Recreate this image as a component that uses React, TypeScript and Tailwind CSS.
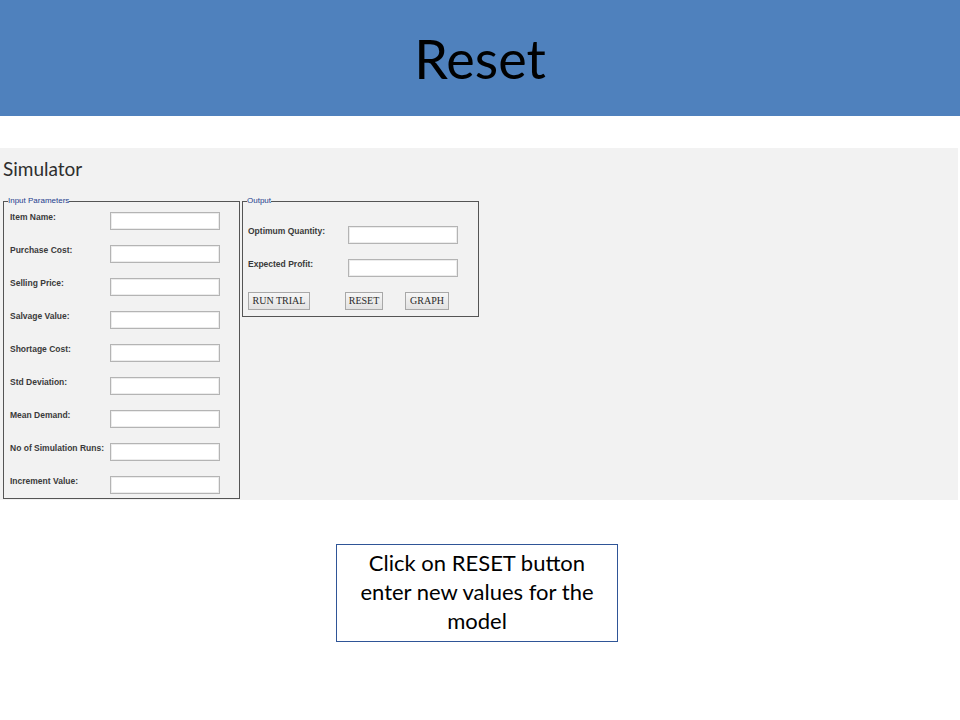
const inputLabels = [
  "Item Name:",
  "Purchase Cost:",
  "Selling Price:",
  "Salvage Value:",
  "Shortage Cost:",
  "Std Deviation:",
  "Mean Demand:",
  "No of Simulation Runs:",
  "Increment Value:",
];

const outputLabels = ["Optimum Quantity:", "Expected Profit:"];

function Field({ label }: { label: string }) {
  return (
    <div className="flex items-start">
      <label className="w-[100px] shrink-0 text-[8.5px] leading-[10px] font-bold text-[#3a3a3a]">
        {label}
      </label>
      <input
        type="text"
        className="w-[110px] h-[18px] bg-white border border-[#b4b4b4] shadow-[inset_0_0_0_1px_#ececec] outline-none"
      />
    </div>
  );
}

function SimButton({ label, className }: { label: string; className: string }) {
  return (
    <button
      className={
        "h-[18px] px-0 whitespace-nowrap bg-gradient-to-b from-[#f6f6f6] to-[#e2e2e2] border border-[#a8a8a8] text-[10px] leading-[16px] text-[#2a2a2a] " +
        className
      }
      style={{ fontFamily: '"Liberation Serif", serif' }}
    >
      {label}
    </button>
  );
}

export default function App() {
  return (
    <div
      className="w-[960px] h-[720px] bg-white"
      style={{ fontFamily: '"Liberation Sans", Arial, sans-serif' }}
    >
      {/* Slide title */}
      <div className="h-[116px] bg-[#4f81bd] flex items-center justify-center">
        <h1
          className="text-[54px] leading-none text-black mt-[2px]"
          style={{ fontFamily: 'Lato, "Open Sans", sans-serif' }}
        >
          Reset
        </h1>
      </div>

      {/* Simulator panel */}
      <div className="mt-[32px] w-[958px] h-[352px] bg-[#f2f2f2] pl-[3px]">
        <h2
          className="pt-[9px] text-[19px] leading-[24px] text-[#2e2e2e]"
          style={{ fontFamily: 'Lato, "Open Sans", sans-serif' }}
        >
          Simulator
        </h2>

        <div className="flex items-start gap-[2px] mt-[15px]">
          <fieldset className="w-[237px] border border-[#555] px-[6px] pb-[4px]">
            <legend className="ml-[-2px] text-[8px] leading-[10px] text-[#24408e]">
              Input Parameters
            </legend>
            <div className="flex flex-col gap-[15px] pt-[6px]">
              {inputLabels.map((l) => (
                <Field key={l} label={l} />
              ))}
            </div>
          </fieldset>

          <fieldset className="w-[237px] border border-[#555] px-[5px] pb-[6px]">
            <legend className="ml-[-1px] text-[8px] leading-[10px] text-[#24408e]">
              Output
            </legend>
            <div className="flex flex-col gap-[15px] pt-[20px]">
              {outputLabels.map((l) => (
                <Field key={l} label={l} />
              ))}
              <div className="flex items-center">
                <SimButton label="RUN TRIAL" className="w-[62px]" />
                <SimButton label="RESET" className="w-[38px] ml-[35px]" />
                <SimButton label="GRAPH" className="w-[44px] ml-[22px]" />
              </div>
            </div>
          </fieldset>
        </div>
      </div>

      {/* Callout */}
      <div
        className="mt-[44px] ml-[336px] w-[282px] h-[98px] border border-[#2f5597] flex items-center justify-center text-center text-[22px] leading-[29px] text-black"
        style={{ fontFamily: 'Lato, "Open Sans", sans-serif' }}
      >
        <p className="whitespace-nowrap -mt-[3px]">
          Click on RESET button
          <br />
          enter new values for the
          <br />
          model
        </p>
      </div>
    </div>
  );
}
